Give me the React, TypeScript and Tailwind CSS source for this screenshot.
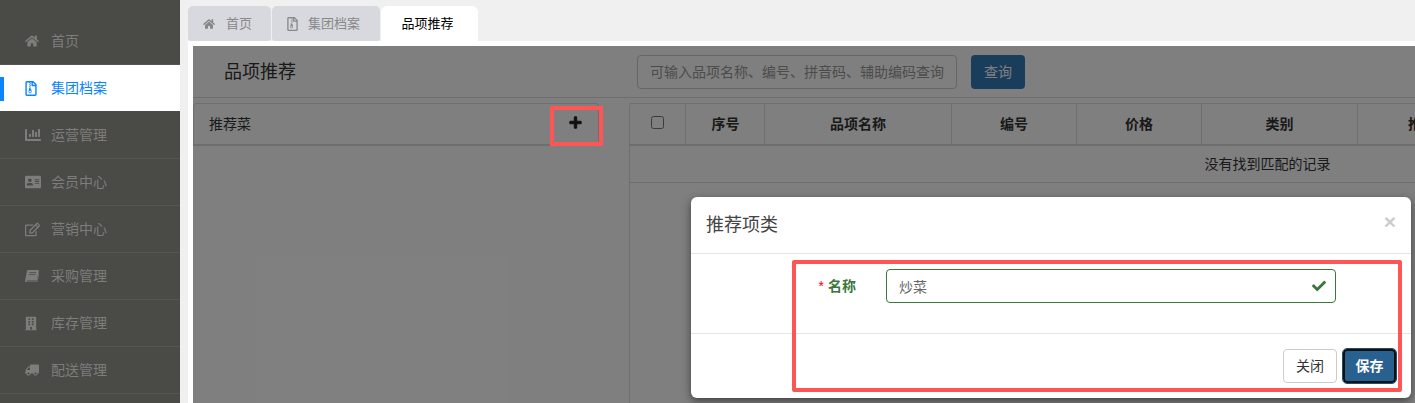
import { FaHome, FaRegFileArchive, FaChartBar, FaAddressCard, FaRegEdit, FaBuilding, FaTruck, FaCheck, FaPlus } from 'react-icons/fa';

// FA4 style slanted book, the icon packages only have the upright one
const BookIcon = () => (
    <svg viewBox="0 0 14 12" className="h-[12px] w-[14px]" fill="currentColor">
        <path d="M3 0h10.2c.5 0 .8.4.7.9L11.9 9.6c-.1.5-.6.9-1.1.9H2.4c-.6 0-.9.4-.9.6 0 .2.3.4.7.4h8.9c.3 0 .5-.1.6-.4l2.2-8.4.5.5-2.1 8.6c-.1.5-.6.7-1.1.7H2C.9 12.500 0 11.700.1 10.600L2 1C2.100.4 2.500 0 3 0zm1.300 2.300-.2.800h6.900l.2-.8H4.300zM3.800 4.300l-.2.800h6.900l.2-.8H3.800z" fillRule="evenodd" />
    </svg>
);

const menu = [
    { icon: <FaHome className="h-[14px] w-[14px]" />, label: '首页' },
    { icon: <FaRegFileArchive className="h-[15px] w-[12px]" />, label: '集团档案', active: true },
    { icon: <FaChartBar className="h-[16px] w-[16px]" />, label: '运营管理' },
    { icon: <FaAddressCard className="h-[16px] w-[16px]" />, label: '会员中心' },
    { icon: <FaRegEdit className="h-[15px] w-[15px]" />, label: '营销中心' },
    { icon: <BookIcon />, label: '采购管理' },
    { icon: <FaBuilding className="h-[15px] w-[12px]" />, label: '库存管理' },
    { icon: <FaTruck className="h-[14px] w-[14px] -scale-x-100" />, label: '配送管理' },
];

const columns = [
    { title: '序号', width: 'w-[78px]' },
    { title: '品项名称', width: 'w-[187px]' },
    { title: '编号', width: 'w-[125px]' },
    { title: '价格', width: 'w-[125px]' },
    { title: '类别', width: 'w-[156px]' },
    { title: '推荐项类', width: 'w-[157px]' },
];

export default function App() {
    return (
        <div className="relative flex h-[403px] w-[1415px] overflow-hidden bg-[#f0f0f0] text-[14px] text-[#333] font-['Liberation_Sans','Noto_Sans_CJK_SC',sans-serif]">
            {/* Sidebar */}
            <aside className="w-[180px] shrink-0 bg-[#4a4a47] pt-[18px] text-[#7d7d7b]">
                {menu.map((item) => (
                    <div
                        key={item.label}
                        className={item.active
                            ? 'relative flex h-[46px] items-center bg-white text-[#0a84ff] mb-px'
                            : 'flex h-[47px] items-center border-b border-[#555552]'}
                    >
                        {item.active && <span className="absolute left-0 top-[12px] h-[24px] w-[4px] bg-[#0a84ff]" />}
                        <span className="flex w-[51px] justify-start pl-[25px]">{item.icon}</span>
                        <span>{item.label}</span>
                    </div>
                ))}
            </aside>

            <main className="flex min-w-0 flex-1 flex-col pl-[8px]">
                {/* Tabs */}
                <div className="flex h-[41px] shrink-0 items-end gap-px text-[13px]">
                    <div className="flex h-[35px] w-[83px] items-center rounded-t-[5px] rounded-b-[3px] bg-[#d8d9de] pl-[15px] text-[#888]">
                        <FaHome className="mr-[11px] h-[12px] w-[12px]" />首页
                    </div>
                    <div className="flex h-[35px] w-[108px] items-center rounded-t-[5px] rounded-b-[3px] bg-[#d8d9de] pl-[15px] text-[#888]">
                        <FaRegFileArchive className="mr-[10px] h-[14px] w-[11px]" />集团档案
                    </div>
                    <div className="flex h-[35px] w-[97px] items-center justify-center rounded-t-[6px] bg-white pr-[4px] text-black">
                        品项推荐
                    </div>
                </div>

                <div className="min-h-0 flex-1 overflow-hidden bg-white pl-[5px] pt-[5px]">
                    <div className="relative h-full overflow-hidden bg-white">
                        {/* Search header */}
                        <div className="flex h-[52px] items-center border-b border-[#ddd] pt-[1px]">
                            <h1 className="w-[444px] pl-[31px] text-[18px] font-normal">品项推荐</h1>
                            <input
                                className="h-[34px] w-[320px] rounded-[4px] border border-[#ccc] px-[12px] text-[14px] placeholder:text-[#999]"
                                placeholder="可输入品项名称、编号、拼音码、辅助编码查询"
                            />
                            <button className="ml-[14px] h-[34px] w-[54px] rounded-[4px] bg-[#337ab7] text-white">查询</button>
                        </div>

                        <div className="flex h-full pt-[5px]">
                            {/* Recommended list */}
                            <div className="w-[406px] shrink-0">
                                <div className="flex h-[43px] items-center justify-between rounded-t-[4px] border border-b-2 border-[#ddd] pl-[15px]">
                                    <span>推荐菜</span>
                                    <FaPlus className="mr-[16px] mb-[4px] h-[13px] w-[13px] text-[#222]" stroke="currentColor" strokeWidth={40} />
                                </div>
                            </div>

                            {/* Table */}
                            <div className="ml-[30px] w-[1276px] shrink-0 rounded-tl-[4px] border-l border-[#ddd]">
                                <div className="flex h-[43px] border-y border-b-2 border-[#ddd] font-bold">
                                    <div className="flex w-[56px] shrink-0 justify-center border-r border-[#ddd] pt-[12px]">
                                        <input type="checkbox" className="h-[13px] w-[13px]" />
                                    </div>
                                    <div className="w-px shrink-0" />
                                    {columns.map((col) => (
                                        <div key={col.title} className={`flex shrink-0 items-center justify-center border-r border-[#ddd] ${col.width}`}>
                                            {col.title}
                                        </div>
                                    ))}
                                </div>
                                <div className="flex h-[37px] items-center justify-center border-b border-[#ddd]">
                                    没有找到匹配的记录
                                </div>
                            </div>
                        </div>

                        {/* Modal backdrop */}
                        <div className="absolute inset-0 bg-black/50" />
                    </div>
                </div>
            </main>

            {/* Modal */}
            <div className="absolute left-[691px] top-[197px] h-[201px] w-[720px] rounded-[6px] bg-white shadow-[0_3px_9px_rgba(0,0,0,0.5)]">
                <div className="flex h-[57px] items-center justify-between border-b border-[#e5e5e5] pl-[15px] pr-[15px]">
                    <h2 className="text-[18px] font-normal text-[#444]">推荐项类</h2>
                    <span className="mb-[8px] text-[21px] font-bold leading-none text-[#ccc]">×</span>
                </div>
                <div className="flex h-[80px] items-start border-b border-[#e5e5e5] pt-[15px]">
                    <label className="flex h-[34px] w-[165px] items-center justify-end text-[14px] font-bold text-[#3c763d]">
                        <span className="mr-[4px] font-normal text-[#f00]">*</span>名称
                    </label>
                    <div className="relative ml-[30px] h-[34px] w-[450px]">
                        <input
                            readOnly
                            value="炒菜"
                            className="h-full w-full rounded-[4px] border border-[#3c763d] px-[12px] text-[14px] text-[#666] outline-none"
                        />
                        <FaCheck className="absolute right-[10px] top-[10px] h-[14px] w-[14px] text-[#3c763d]" />
                    </div>
                </div>
                <div className="flex justify-end gap-[6px] pr-[15px] pt-[15px]">
                    <button className="h-[34px] w-[54px] rounded-[4px] border border-[#ccc] bg-white text-[#333]">关闭</button>
                    <button className="h-[34px] w-[53px] rounded-[4px] border-2 border-[#111] bg-[#286090] font-bold text-white outline outline-1 outline-[#204d74]">保存</button>
                </div>
            </div>

            {/* Red annotation boxes */}
            <div className="absolute left-[550px] top-[106px] h-[40px] w-[53px] border-4 border-[#ff5555]" />
            <div className="absolute left-[792px] top-[260px] h-[132px] w-[610px] rounded-[2px] border-4 border-[#ff5555]" />
        </div>
    );
}
